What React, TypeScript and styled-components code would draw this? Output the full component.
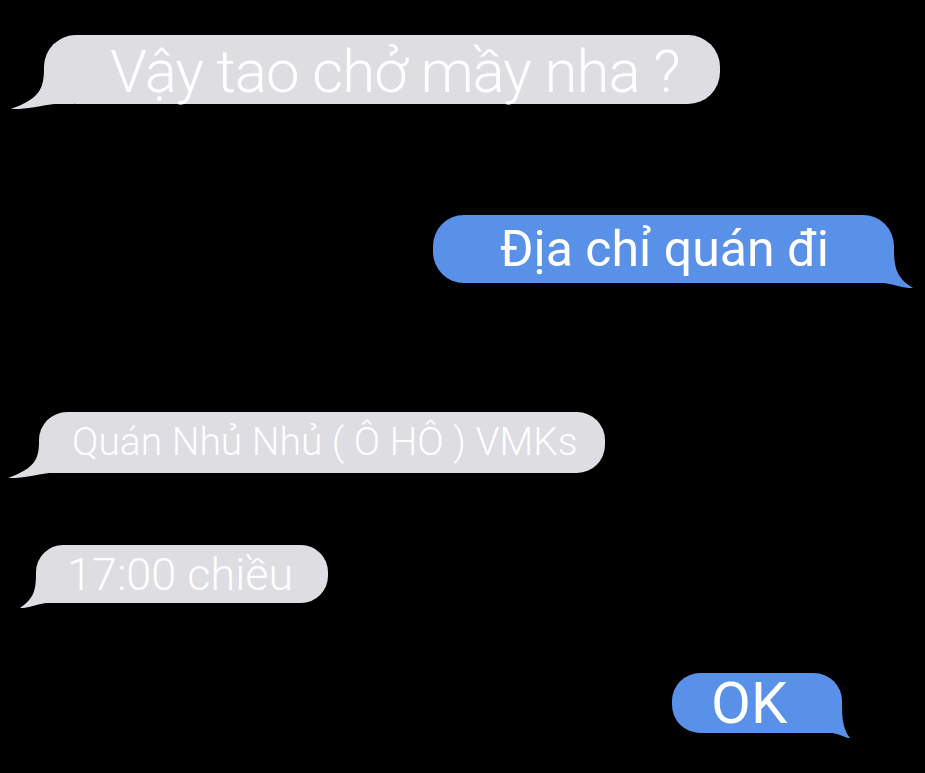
import styled, {createGlobalStyle} from "styled-components";

const GRAY = "rgb(221, 221, 226)";
const BLUE = "rgb(89, 145, 232)";

const GlobalStyle = createGlobalStyle`
    html, body {
        margin: 0;
        padding: 0;
        background: #000;
    }
    body {
        font-family: Roboto, "Liberation Sans", sans-serif;
    }
`;

const Thread = styled.div`
    width: 925px;
    height: 773px;
    background: #000;
    display: flex;
    flex-direction: column;
    overflow: hidden;
`;

const Row = styled.div<{top: number; side: "left" | "right"; inset: number}>`
    display: flex;
    justify-content: ${props => (props.side === "left" ? "flex-start" : "flex-end")};
    margin-top: ${props => props.top}px;
    padding-left: ${props => (props.side === "left" ? props.inset : 0)}px;
    padding-right: ${props => (props.side === "right" ? props.inset : 0)}px;
`;

const Bubble = styled.div<{blue?: boolean; w: number; h: number; pad: number}>`
    position: relative;
    box-sizing: border-box;
    width: ${props => props.w}px;
    height: ${props => props.h}px;
    padding-left: ${props => props.pad}px;
    border-radius: ${props => Math.round(props.h * 0.46)}px;
    background: ${props => (props.blue ? BLUE : GRAY)};
    display: flex;
    align-items: center;
    white-space: nowrap;
`;

const Text = styled.span<{size: number; weight?: number; tracking?: number; drop?: number}>`
    color: #fff;
    font-size: ${props => props.size}px;
    font-weight: ${props => props.weight ?? 400};
    letter-spacing: ${props => props.tracking ?? 0}px;
    line-height: 1;
    position: relative;
    top: ${props => props.drop ?? 0}px;
    z-index: 1;
`;

const TailSvg = styled.svg<{side: "left" | "right"}>`
    position: absolute;
    bottom: -5px;
    transform: ${props => (props.side === "left" ? "none" : "scaleX(-1)")};
    overflow: visible;
`;

interface TailProps {
    side: "left" | "right";
    reach: number;
    rise: number;
    color: string;
}

// tail drawn in left orientation, mirrored for the right side
const Tail = ({side, reach, rise, color}: TailProps) => {
    const w = reach + 30;
    const h = rise + 5;
    const d = `M${reach} 0 C${reach} ${rise * 0.6}, ${reach * 0.85} ${rise * 0.85}, 0 ${h}
        C${reach * 0.45} ${h + 0.5}, ${reach * 0.85} ${rise + 2}, ${reach + 10} ${rise}
        L${w} ${rise} L${w} 0 Z`;
    return (
        <TailSvg side={side} width={w} height={h} viewBox={`0 0 ${w} ${h}`} style={{[side]: -reach}}>
            <path d={d} fill={color} />
        </TailSvg>
    );
};

export default function App() {
    return (
        <Thread>
            <GlobalStyle />
            <Row top={35} side="left" inset={44}>
                <Bubble w={676} h={69} pad={66}>
                    <Tail side="left" reach={33} rise={36} color={GRAY} />
                    <Text size={60} weight={300} tracking={-1} drop={2}>Vậy tao chở mầy nha ?</Text>
                </Bubble>
            </Row>
            <Row top={111} side="right" inset={31}>
                <Bubble blue w={461} h={68} pad={67}>
                    <Tail side="right" reach={19} rise={35} color={BLUE} />
                    <Text size={50}>Địa chỉ quán đi</Text>
                </Bubble>
            </Row>
            <Row top={129} side="left" inset={39}>
                <Bubble w={566} h={61} pad={33}>
                    <Tail side="left" reach={31} rise={32} color={GRAY} />
                    <Text size={39} weight={300}>Quán Nhủ Nhủ ( Ô HÔ ) VMKs</Text>
                </Bubble>
            </Row>
            <Row top={72} side="left" inset={36}>
                <Bubble w={292} h={58} pad={31}>
                    <Tail side="left" reach={16} rise={30} color={GRAY} />
                    <Text size={45} weight={300}>17:00 chiều</Text>
                </Bubble>
            </Row>
            <Row top={70} side="right" inset={83}>
                <Bubble blue w={170} h={60} pad={39}>
                    <Tail side="right" reach={8} rise={31} color={BLUE} />
                    <Text size={58}>OK</Text>
                </Bubble>
            </Row>
        </Thread>
    );
}
